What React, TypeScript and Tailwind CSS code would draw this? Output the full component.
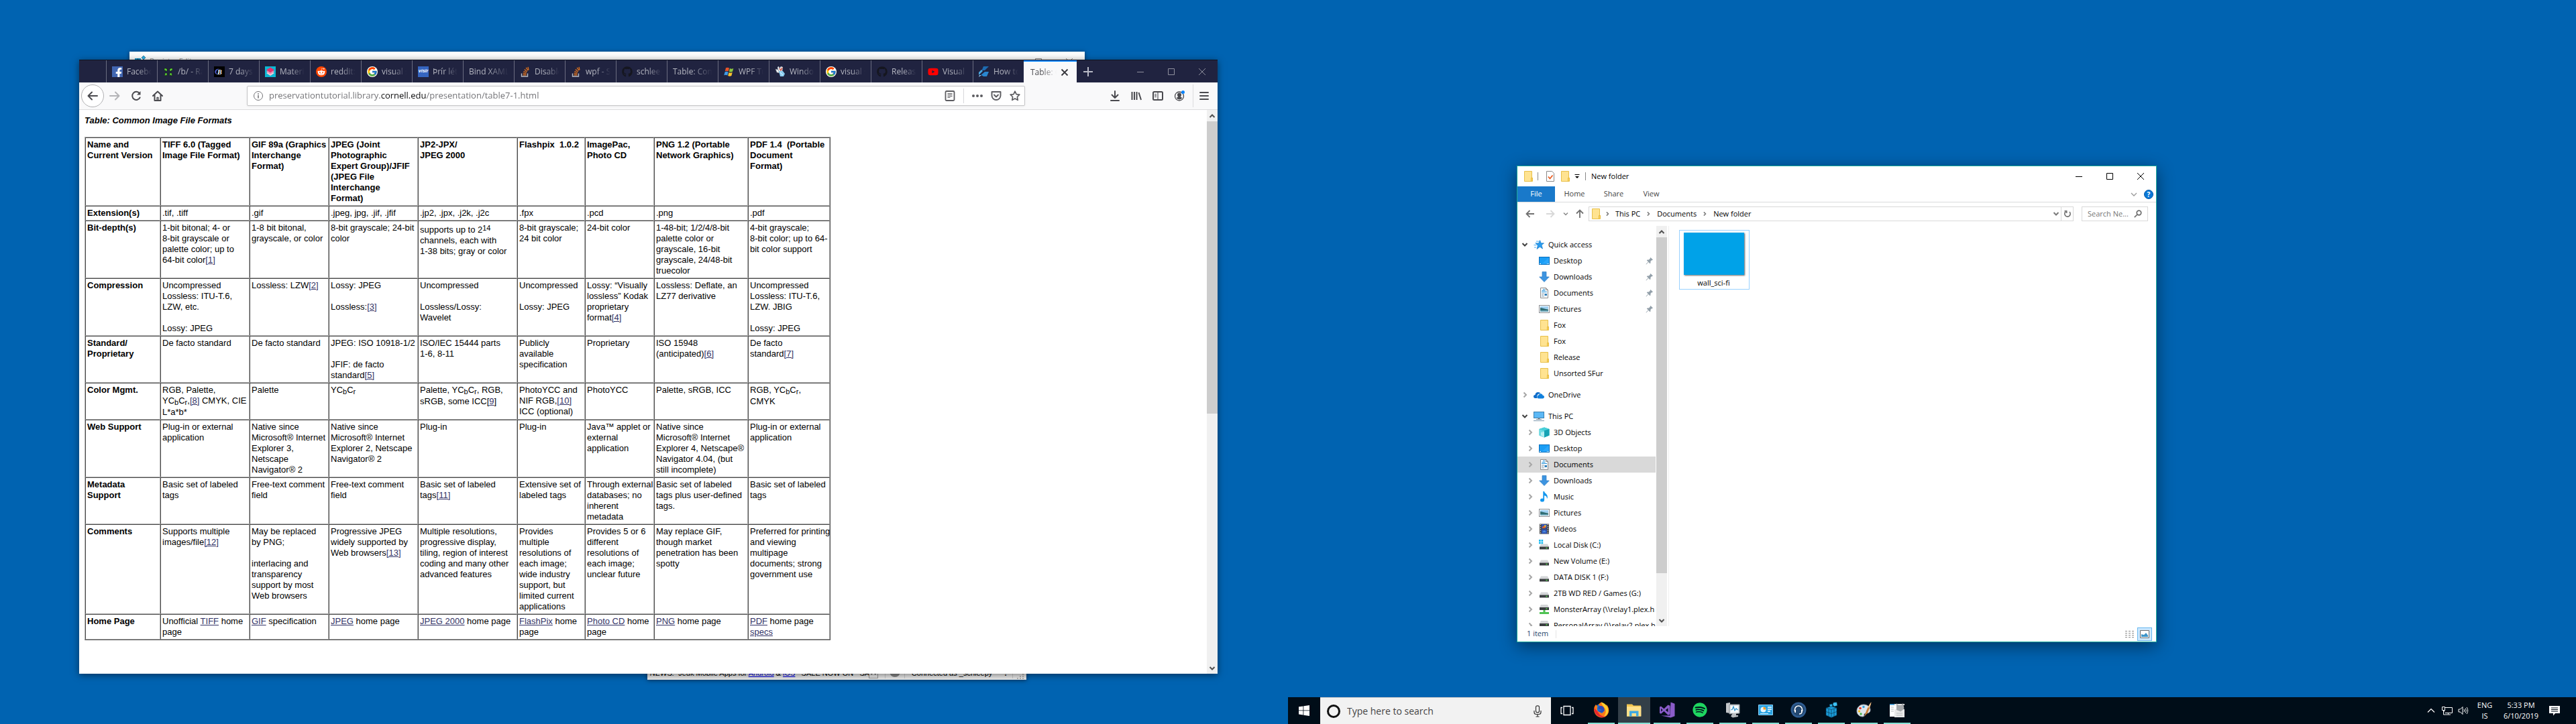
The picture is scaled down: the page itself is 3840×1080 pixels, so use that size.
import React from "react";
import { FaFacebookF, FaGithub, FaSpotify, FaRedditAlien, FaYoutube } from "react-icons/fa";
import { FcGoogle } from "react-icons/fc";

type Kids = { children?: React.ReactNode };

/* ---------- Browser tab favicons ---------- */

function Tile({ className, children }: Kids & { className: string }) {
  return <span className={"flex size-4 shrink-0 items-center justify-center overflow-hidden " + className}>{children}</span>;
}

const StackIcon = () => (
  <svg viewBox="0 0 16 16" className="size-4 shrink-0" fill="none" strokeWidth="1.4">
    <path d="M2.500 10.500v4.500h9v-4.500" stroke="#b9bcc4" />
    <path d="M4.500 12.800h5M4.600 10.300l5 .6M5.300 7.600l4.700 1.600M6.800 4.600l4 3.100M9.200 1.800l2.900 4.400M12 .8l1 4.500" stroke="#d9701e" />
  </svg>
);

const WinFlag = () => (
  <svg viewBox="0 0 16 16" className="size-4 shrink-0">
    <path d="M3 2.200c1.800-.9 3.500-.6 5 .3L6.800 7.400c-1.500-.9-3.200-1-5-.2z" fill="#e8542a" />
    <path d="M9 3c1.700.9 3.500.8 5.300-.1L13 7.800c-1.800.8-3.500.9-5.200 0z" fill="#8cc63f" />
    <path d="M1.500 8.400c1.800-.8 3.500-.7 5 .2L5.300 13.500c-1.500-.9-3.300-1-5-.2z" fill="#3f9be6" />
    <path d="M7.500 9.100c1.700.9 3.500.8 5.200 0l-1.300 4.900c-1.700.8-3.500.9-5.200 0z" fill="#fbc52d" />
  </svg>
);

const FourArrows = () => (
  <svg viewBox="0 0 16 16" className="size-4 shrink-0" fill="#5fd33a" stroke="#0c1c0a" strokeWidth=".5">
    <path d="M2 3h3v1l1-1v4H3l1-1H2zM14 3h-3v1l-1-1v4h3l-1-1h2zM2.500 14l.5-4h3v4H5v-1H4v1zM13.500 14l-.5-4h-3v4h1v-1h1v1z" />
  </svg>
);

const tabs: { label: string; icon?: React.ReactNode }[] = [
  { label: "Facebook", icon: <Tile className="bg-[#4267b2]"><FaFacebookF className="mt-1 ml-1 size-4 text-white" /></Tile> },
  { label: "/b/ - Random", icon: <FourArrows /> },
  {
    label: "7 days to",
    icon: (
      <Tile className="bg-black">
        <svg viewBox="0 0 16 16" className="size-4">
          <path d="M8 3.500C3 3 .5 6.500 1.500 9.500c.8 2.400 3.500 3 5 2.500C3.500 11.500 2.500 9 4 6.500 5 4.800 6.500 4 8 3.500z" fill="#4a58c8" />
          <text x="5" y="12" fontSize="10" fontWeight="700" fontStyle="italic" fontFamily="Liberation Serif, serif" fill="#fff">B</text>
        </svg>
      </Tile>
    ),
  },
  {
    label: "Material",
    icon: (
      <Tile className="bg-[#0bb8d4]">
        <svg viewBox="0 0 16 16" className="size-4">
          <path d="M2 10l6 4 6-4-2-1.200-4 2.600-4-2.600z" fill="#f7c9d8" />
          <path d="M2 7.500l6 4 6-4-2-1.200-4 2.700-4-2.700z" fill="#f48fb1" />
          <path d="M8 1.500l6 3.700-6 4-6-4z" fill="#e9316d" />
        </svg>
      </Tile>
    ),
  },
  { label: "reddit: the", icon: <Tile className="rounded-full bg-[#ff4500]"><FaRedditAlien className="size-3 text-white" /></Tile> },
  { label: "visual studio", icon: <Tile className="rounded-full bg-white"><FcGoogle className="size-4" /></Tile> },
  {
    label: "Þrír létust",
    icon: <Tile className="bg-[#3565c0] font-['Liberation_Sans',sans-serif] text-[7px] font-bold text-white italic">vísir</Tile>,
  },
  { label: "Bind XAML to" },
  { label: "Disable the", icon: <StackIcon /> },
  { label: "wpf - Style", icon: <StackIcon /> },
  { label: "schleepy", icon: <FaGithub className="size-4 shrink-0 text-[#15161f]" /> },
  { label: "Table: Common" },
  { label: "WPF Tutorial", icon: <WinFlag /> },
  {
    label: "Windows",
    icon: (
      <svg viewBox="0 0 16 16" className="size-4 shrink-0">
        <path d="M4 1l2-1 1 3 2-3 3 1-1 7H5z" fill="#dfe3e8" />
        <path d="M7 3l2 3 2-4" stroke="#d8432f" fill="none" strokeWidth="1.300" />
        <path d="M1 4l4 1 2 5-4-1z" fill="#f2f4f6" stroke="#6d7680" strokeWidth=".6" />
        <path d="M6 7l6 0 3 4-2 4H8z" fill="#8ccdf0" />
        <path d="M8 9l4 4" stroke="#e8f6ff" />
      </svg>
    ),
  },
  { label: "visual studio", icon: <Tile className="rounded-full bg-white"><FcGoogle className="size-4" /></Tile> },
  { label: "Releases", icon: <FaGithub className="size-4 shrink-0 text-[#15161f]" /> },
  { label: "Visual Studio", icon: <FaYoutube className="size-4 shrink-0 text-[#ff0000]" /> },
  {
    label: "How to use",
    icon: (
      <svg viewBox="0 0 16 16" className="size-4 shrink-0">
        <path d="M7 0h8L9 6H4.500z" fill="#1d6bb0" />
        <path d="M4 5L0 9v4l6-6z" fill="#4aa7e0" />
        <path d="M1 15L9 8h6l-3 7H7L4 13z" fill="#2a86cf" />
        <path d="M0 16l4-3H1z" fill="#8fc9f0" />
      </svg>
    ),
  },
];

/* ---------- Firefox chrome ---------- */

function TabStrip() {
  return (
    <div className="flex h-[34px] border-t border-[#10131f] bg-[#202340] text-[12px] text-[#b4b6c0]">
      <div className="w-10 shrink-0" />
      <div role="tablist" className="flex max-w-[1447px] min-w-0 flex-1">
        {tabs.map((t, i) => (
          <button key={i} role="tab" className="flex min-w-0 flex-1 basis-0 items-center gap-[6px] border-l border-[#6a6c80] px-2">
            {t.icon}
            <span className="min-w-0 flex-1 overflow-hidden text-left whitespace-nowrap [mask-image:linear-gradient(to_right,black_45%,transparent)]">
              {t.label}
            </span>
          </button>
        ))}
        <div role="tab" aria-selected="true" className="flex min-w-0 flex-1 basis-0 items-center gap-1 border-t-2 border-[#0a84ff] bg-[#f9f9fa] pr-[10px] pl-[10px] text-[#4c4c50]">
          <span className="min-w-0 flex-1 overflow-hidden whitespace-nowrap [mask-image:linear-gradient(to_right,black_45%,transparent)]">Table: Common</span>
          <button aria-label="Close tab">
            <svg viewBox="0 0 16 16" className="size-4" stroke="#38383d" strokeWidth="1.800"><path d="M3.500 3.500l9 9M12.500 3.500l-9 9" /></svg>
          </button>
        </div>
      </div>
      <button aria-label="New tab" className="flex w-[34px] shrink-0 items-center justify-center">
        <svg viewBox="0 0 16 16" className="size-4" stroke="#b9bac6" strokeWidth="2"><path d="M8 1v14M1 8h14" /></svg>
      </button>
      <div className="ml-auto flex">
        <button aria-label="Minimize" className="flex w-[46px] items-center justify-center">
          <svg viewBox="0 0 10 10" className="size-[10px]" stroke="#8f909e"><path d="M0 5.500h10" /></svg>
        </button>
        <button aria-label="Maximize" className="flex w-[46px] items-center justify-center">
          <svg viewBox="0 0 10 10" className="size-[10px]" fill="none" stroke="#8f909e"><path d="M.5.5h9v9h-9z" /></svg>
        </button>
        <button aria-label="Close" className="flex w-[46px] items-center justify-center">
          <svg viewBox="0 0 10 10" className="size-[10px]" stroke="#8f909e"><path d="M0 0l10 10M10 0L0 10" /></svg>
        </button>
      </div>
    </div>
  );
}

function ToolButton({ label, children }: Kids & { label: string }) {
  return (
    <button aria-label={label} className="flex w-8 shrink-0 items-center justify-center">
      <svg viewBox="0 0 16 16" className="size-4" fill="none" stroke="#4a4a4f" strokeWidth="2" strokeLinecap="round" strokeLinejoin="round">
        {children}
      </svg>
    </button>
  );
}

function UrlBar() {
  return (
    <div className="ml-[117px] flex h-[30px] max-w-[1160px] min-w-0 flex-1 items-center rounded-[2px] border border-[#c4c4c6] bg-white shadow-[0_1px_3px_rgba(0,0,0,0.06)]">
      <svg viewBox="0 0 16 16" className="mr-2 ml-2 size-4 shrink-0" fill="none" stroke="#737377">
        <circle cx="8" cy="8" r="6.500" />
        <path d="M8 7v4.500M8 4.300v1.600" strokeWidth="1.600" />
      </svg>
      <input
        aria-label="Address"
        readOnly
        value="preservationtutorial.library.cornell.edu/presentation/table7-1.html"
        className="min-w-0 flex-1 bg-[linear-gradient(to_right,#6f6f73_166px,#0c0c0d_166px,#0c0c0d_234px,#6f6f73_234px)] bg-clip-text text-[13px] text-transparent outline-none"
      />
      <button aria-label="Reader view" className="mr-[12px]">
        <svg viewBox="0 0 16 16" className="size-4" fill="none" stroke="#5c5c60">
          <rect x="1.500" y="1" width="13" height="14" rx="1.500" strokeWidth="1.800" />
          <path d="M4.500 4.500h7M4.500 6.500h7M4.500 8.500h7M4.500 10.500h4" />
        </svg>
      </button>
      <div className="h-[22px] w-px bg-[#d7d7db]" />
      <button aria-label="Page actions" className="ml-3">
        <svg viewBox="0 0 16 16" className="size-4" fill="#5c5c60"><circle cx="2" cy="8" r="2" /><circle cx="8" cy="8" r="2" /><circle cx="14" cy="8" r="2" /></svg>
      </button>
      <button aria-label="Save to Pocket" className="ml-3">
        <svg viewBox="0 0 16 16" className="size-4" fill="none" stroke="#5c5c60" strokeWidth="1.900" strokeLinecap="round" strokeLinejoin="round">
          <path d="M1.500 2h13v5.500a6.500 6.500 0 0 1-13 0z" /><path d="M5 6.500l3 3 3-3" />
        </svg>
      </button>
      <button aria-label="Bookmark" className="mr-[6px] ml-3">
        <svg viewBox="0 0 16 16" className="size-4" fill="none" stroke="#5c5c60" strokeWidth="1.700" strokeLinejoin="round">
          <path d="M8 1.200l2.100 4.400 4.700.6-3.400 3.300.8 4.800L8 12l-4.200 2.300.8-4.800L1.200 6.200l4.700-.6z" />
        </svg>
      </button>
    </div>
  );
}

function NavBar() {
  return (
    <div className="flex h-[41px] items-center border-b border-[#dcdcde] bg-[#f9f9fa] pl-[3px]">
      <button aria-label="Back" className="flex size-[34px] shrink-0 items-center justify-center rounded-full border border-[#b1b1b3] bg-white">
        <svg viewBox="0 0 16 16" className="size-4" fill="none" stroke="#4a4a4f" strokeWidth="2" strokeLinecap="round" strokeLinejoin="round"><path d="M15 8H1.500M7 2.500L1.500 8 7 13.500" /></svg>
      </button>
      <button aria-label="Forward" className="flex w-8 shrink-0 items-center justify-center">
        <svg viewBox="0 0 16 16" className="size-4" fill="none" stroke="#b4b4b7" strokeWidth="2" strokeLinecap="round" strokeLinejoin="round"><path d="M1 8h13.500M9 2.500L14.500 8 9 13.500" /></svg>
      </button>
      <ToolButton label="Reload"><path d="M13.600 10.500A6 6 0 1 1 12.800 4" /><path d="M14.500 1v5.500H9z" fill="#4a4a4f" stroke="none" /></ToolButton>
      <ToolButton label="Home"><path d="M1 8l7-6.500L15 8M3.500 7v8h9V7" /><path d="M7 15v-4.500h2V15" strokeWidth="1.300" /></ToolButton>
      <UrlBar />
      <div className="ml-auto flex h-full items-center pr-1">
        <ToolButton label="Downloads"><path d="M8 1v9.500M3.500 6.500L8 11l4.500-4.500M2 15h12" /></ToolButton>
        <ToolButton label="Library"><path d="M1.500 2v12M5 2v12M8.500 2v12M11.500 3l3.500 11" strokeLinecap="butt" /></ToolButton>
        <ToolButton label="Sidebars"><rect x="1" y="2" width="14" height="12" rx="1.500" /><path d="M8 2v12M3.500 5.500h2M3.500 7.500h2M3.500 9.500h2" strokeWidth="1.100" /></ToolButton>
        <ToolButton label="Account">
          <circle cx="8" cy="8.500" r="6.500" strokeWidth="1.300" />
          <path d="M8 3.500a3 3 0 0 1 3 3c0 1.600-.8 2.600-1.300 3l2.800 1.500A5.500 5.500 0 0 1 8 13.500 5.500 5.500 0 0 1 3.500 11l2.800-1.500C5.800 9.100 5 8.100 5 6.500a3 3 0 0 1 3-3z" fill="#4a4a4f" stroke="none" />
          <circle cx="13.500" cy="2.500" r="2.500" fill="#0a84ff" stroke="none" />
        </ToolButton>
        <div className="ml-1 h-[34px] w-px bg-[#dcdcde]" />
        <ToolButton label="Menu"><path d="M2 3h12M2 8h12M2 13h12" /></ToolButton>
      </div>
    </div>
  );
}

/* ---------- Web page ---------- */

/* {..} marks a link, ~..~ a subscript and ^..^ a superscript. */
function Rich({ text }: { text: string }) {
  return (
    <>
      {text.split(/(\{.*?\}|~.*?~|\^.*?\^)/).map((part, i) => {
        const inner = part.slice(1, -1);
        if (part.startsWith("{")) return <a key={i} href="#" className="text-[#333366] underline">{inner}</a>;
        if (part.startsWith("~")) return <sub key={i} className="static align-[-2px] text-[11px] leading-[13px]">{inner}</sub>;
        if (part.startsWith("^")) return <sup key={i} className="static align-[3px] text-[11px] leading-4">{inner}</sup>;
        return <React.Fragment key={i}>{part}</React.Fragment>;
      })}
    </>
  );
}

const columns = ["w-[112px]", "w-[133px]", "w-[118px]", "w-[133px]", "w-[148px]", "w-[101px]", "w-[103px]", "w-[140px]", "w-[122px]"];

const headings = [
  "Name and\nCurrent Version",
  "TIFF 6.0 (Tagged\nImage File Format)",
  "GIF 89a (Graphics\nInterchange\nFormat)",
  "JPEG (Joint\nPhotographic\nExpert Group)/JFIF\n(JPEG File\nInterchange\nFormat)",
  "JP2-JPX/\nJPEG 2000",
  "Flashpix  1.0.2",
  "ImagePac,\nPhoto CD",
  "PNG 1.2 (Portable\nNetwork Graphics)",
  "PDF 1.4  (Portable\nDocument\nFormat)",
];

const rows = [
  ["Extension(s)", ".tif, .tiff", ".gif", ".jpeg, jpg, .jif, .jfif", ".jp2, .jpx, .j2k, .j2c", ".fpx", ".pcd", ".png", ".pdf"],
  [
    "Bit-depth(s)",
    "1-bit bitonal; 4- or\n8-bit grayscale or\npalette color; up to\n64-bit color{[1]}",
    "1-8 bit bitonal,\ngrayscale, or color",
    "8-bit grayscale; 24-bit\ncolor",
    "supports up to 2^14^\nchannels, each with\n1-38 bits; gray or color",
    "8-bit grayscale;\n24 bit color",
    "24-bit color",
    "1-48-bit; 1/2/4/8-bit\npalette color or\ngrayscale, 16-bit\ngrayscale, 24/48-bit\ntruecolor",
    "4-bit grayscale;\n8-bit color; up to 64-\nbit color support",
  ],
  [
    "Compression",
    "Uncompressed\nLossless: ITU-T.6,\nLZW, etc.\n\nLossy: JPEG",
    "Lossless: LZW{[2]}",
    "Lossy: JPEG\n\nLossless:{[3]}",
    "Uncompressed\n\nLossless/Lossy:\nWavelet",
    "Uncompressed\n\nLossy: JPEG",
    "Lossy: “Visually\nlossless” Kodak\nproprietary\nformat{[4]}",
    "Lossless: Deflate, an\nLZ77 derivative",
    "Uncompressed\nLossless: ITU-T.6,\nLZW. JBIG\n\nLossy: JPEG",
  ],
  [
    "Standard/\nProprietary",
    "De facto standard",
    "De facto standard",
    "JPEG: ISO 10918-1/2\n\nJFIF: de facto\nstandard{[5]}",
    "ISO/IEC 15444 parts\n1-6, 8-11",
    "Publicly\navailable\nspecification",
    "Proprietary",
    "ISO 15948\n(anticipated){[6]}",
    "De facto\nstandard{[7]}",
  ],
  [
    "Color Mgmt.",
    "RGB, Palette,\nYC~b~C~r~,{[8]} CMYK, CIE\nL*a*b*",
    "Palette",
    "YC~b~C~r~",
    "Palette, YC~b~C~r~, RGB,\nsRGB, some ICC[{9}]",
    "PhotoYCC and\nNIF RGB,{[10]}\nICC (optional)",
    "PhotoYCC",
    "Palette, sRGB, ICC",
    "RGB, YC~b~C~r~,\nCMYK",
  ],
  [
    "Web Support",
    "Plug-in or external\napplication",
    "Native since\nMicrosoft® Internet\nExplorer 3,\nNetscape\nNavigator® 2",
    "Native since\nMicrosoft® Internet\nExplorer 2, Netscape\nNavigator® 2",
    "Plug-in",
    "Plug-in",
    "Java™ applet or\nexternal\napplication",
    "Native since\nMicrosoft® Internet\nExplorer 4, Netscape®\nNavigator 4.04, (but\nstill incomplete)",
    "Plug-in or external\napplication",
  ],
  [
    "Metadata\nSupport",
    "Basic set of labeled\ntags",
    "Free-text comment\nfield",
    "Free-text comment\nfield",
    "Basic set of labeled\ntags{[11]}",
    "Extensive set of\nlabeled tags",
    "Through external\ndatabases; no\ninherent\nmetadata",
    "Basic set of labeled\ntags plus user-defined\ntags.",
    "Basic set of labeled\ntags",
  ],
  [
    "Comments",
    "Supports multiple\nimages/file{[12]}",
    "May be replaced\nby PNG;\n\ninterlacing and\ntransparency\nsupport by most\nWeb browsers",
    "Progressive JPEG\nwidely supported by\nWeb browsers{[13]}",
    "Multiple resolutions,\nprogressive display,\ntiling, region of interest\ncoding and many other\nadvanced features",
    "Provides\nmultiple\nresolutions of\neach image;\nwide industry\nsupport, but\nlimited current\napplications",
    "Provides 5 or 6\ndifferent\nresolutions of\neach image;\nunclear future",
    "May replace GIF,\nthough market\npenetration has been\nspotty",
    "Preferred for printing\nand viewing\nmultipage\ndocuments; strong\ngovernment use",
  ],
  [
    "Home Page",
    "Unofficial {TIFF} home\npage",
    "{GIF} specification",
    "{JPEG} home page",
    "{JPEG 2000} home page",
    "{FlashPix} home\npage",
    "{Photo CD} home\npage",
    "{PNG} home page",
    "{PDF} home page\n{specs}",
  ],
];

const cell = "border border-t-[#4a4a4a] border-r-[#b0b0b0] border-b-[#b0b0b0] border-l-[#4a4a4a] p-[2px] text-left align-top whitespace-pre";

function FormatsPage() {
  return (
    <article className="min-w-0 flex-1 overflow-hidden bg-white p-2 font-['Liberation_Sans',Arial,sans-serif] text-[13px] leading-4 text-black">
      <h1 className="mb-4 font-bold italic">Table: Common Image File Formats</h1>
      <table className="w-[1112px] table-fixed border-separate border-spacing-0 border border-t-[#b0b0b0] border-r-[#4a4a4a] border-b-[#4a4a4a] border-l-[#b0b0b0]">
        <colgroup>{columns.map((w, i) => <col key={i} className={w} />)}</colgroup>
        <thead>
          <tr>{headings.map((h) => <th key={h} scope="col" className={cell + " font-bold"}>{h}</th>)}</tr>
        </thead>
        <tbody>
          {rows.map((r) => (
            <tr key={r[0]}>
              <th scope="row" className={cell + " font-bold"}>{r[0]}</th>
              {r.slice(1).map((c, i) => <td key={i} className={cell}><Rich text={c} /></td>)}
            </tr>
          ))}
        </tbody>
      </table>
    </article>
  );
}

function Arrow({ d, className = "" }: { d: string; className?: string }) {
  return (
    <svg viewBox="0 0 10 10" className={"size-[10px] shrink-0 " + className} fill="none" stroke="currentColor" strokeWidth="2"><path d={d} /></svg>
  );
}
const UP = "M1.500 7L5 3.500 8.500 7";
const DOWN = "M1.500 3L5 6.500 8.500 3";
const RIGHT = "M3.500 1.500L7 5 3.500 8.500";

function ScrollBar({ thumb }: { thumb: string }) {
  return (
    <div className="flex w-4 shrink-0 flex-col items-center bg-[#f0f0f0] text-[#505050]">
      <div className="flex h-[17px] items-center"><Arrow d={UP} /></div>
      <div className="flex w-full flex-1 flex-col"><div className={"w-full bg-[#cdcdcd] " + thumb} /></div>
      <div className="flex h-[17px] items-center"><Arrow d={DOWN} /></div>
    </div>
  );
}

function FirefoxWindow() {
  return (
    <section aria-label="Firefox" className="absolute top-[89px] right-[105px] bottom-[75px] left-[118px] flex flex-col bg-white shadow-[0_2px_10px_rgba(0,0,0,0.5)]">
      <TabStrip />
      <NavBar />
      <div className="flex min-h-0 flex-1">
        <FormatsPage />
        <ScrollBar thumb="h-[54%]" />
      </div>
    </section>
  );
}

/* ---------- Windows behind the browser ---------- */

function RegistryWindow() {
  return (
    <section aria-label="Registry Editor" className="absolute top-[77px] right-[303px] left-[193px] flex h-[200px] items-start bg-[#fdfdfd] pt-[6px] pl-2 shadow-[0_1px_6px_rgba(0,0,0,0.5)]">
      <svg viewBox="0 0 16 16" className="size-4">
        <path d="M0 4h9v12H0z" fill="#1593c9" /><path d="M4.500 4v12M0 8h9" stroke="#0b4f75" /><path d="M13 0l3 3-3 3-3-3z" fill="#2db3e8" stroke="#0b4f75" strokeWidth=".6" />
      </svg>
      <span className="ml-[6px] text-[11px] text-[#999]">Registry Editor</span>
      <div className="mr-[18px] ml-auto flex gap-[36px] pt-1 text-[#888]">
        <svg viewBox="0 0 10 10" className="size-[10px]" fill="none" stroke="currentColor"><path d="M.5.5h9v9h-9z" /></svg>
        <svg viewBox="0 0 10 10" className="size-[10px]" stroke="currentColor"><path d="M0 0l10 10M10 0L0 10" /></svg>
      </div>
    </section>
  );
}

function StatusWindow() {
  return (
    <section aria-label="Messenger status" className="absolute right-[390px] bottom-[66px] left-[965px] flex h-6 items-center bg-[#ececec] px-1 font-['Liberation_Sans',Arial,sans-serif] text-[11px] whitespace-pre text-black shadow-[0_1px_6px_rgba(0,0,0,0.5)]">
      <p className="min-w-0 flex-1 overflow-hidden pt-1">
        <i>NEWS:</i>{"  Jeuk Mobile Apps for "}<a href="#" className="text-[#0000ee] underline">Android</a>{" & "}<a href="#" className="text-[#0000ee] underline">iOS</a>{"   SALE NOW ON   SAVE !"}
      </p>
      <button aria-label="Scroll news" className="mt-1 flex h-4 w-[14px] shrink-0 items-center justify-center border border-[#999] text-[#555]"><Arrow d={UP} /></button>
      <div className="ml-[10px] h-5 w-px bg-[#ccc]" />
      <div className="mx-[6px] h-4 w-4 shrink-0 rounded-full bg-[#888]" />
      <div className="mr-[10px] h-5 w-px bg-[#ccc]" />
      <span className="pt-1 pr-[18px]">Connected as _schleepy</span>
      <span className="pt-1 pr-2 font-bold">!</span>
      <div className="h-5 w-px bg-[#ccc]" />
      <svg viewBox="0 0 10 10" className="ml-[6px] size-[10px] shrink-0 self-end" fill="#b5b5b5"><path d="M8 1h2v2H8zM4 4h2v2H4zM8 4h2v2H8zM0 7h2v2H0zM4 7h2v2H4zM8 7h2v2H8z" /></svg>
    </section>
  );
}

/* ---------- File Explorer ---------- */

const Folder = () => (
  <svg viewBox="0 0 16 16" className="size-4 shrink-0">
    <path d="M2.500.5h11v10h1v5h-12z" fill="#ffe391" stroke="#e8c04a" />
    <path d="M12.500 15v-4.500h2V15" fill="#fbd86b" stroke="#e8b93a" />
  </svg>
);
const DesktopIcon = () => (
  <svg viewBox="0 0 16 16" className="size-4 shrink-0">
    <rect x=".5" y="2.500" width="15" height="11" fill="#1a9df4" stroke="#0a6fbc" /><path d="M15 3v9L4 13z" fill="#35adff" opacity=".6" /><path d="M1 12.500h2M12 12.500h1M14 12.500h1" stroke="#fff" />
  </svg>
);
const DownloadIcon = () => (
  <svg viewBox="0 0 16 16" className="size-4 shrink-0"><path d="M5 .5h6V8h4.300L8 15.500.7 8H5z" fill="#3d94e0" stroke="#2a7bc4" strokeWidth=".7" /></svg>
);
const DocIcon = () => (
  <svg viewBox="0 0 16 16" className="size-4 shrink-0">
    <path d="M2.500.5h8l3 3v12h-11z" fill="#fff" stroke="#8a8a8a" /><path d="M10.500.5v3h3" fill="none" stroke="#8a8a8a" />
    <path d="M6 2.500h3M4.500 4.500h5M4 6.500h8" stroke="#1e8fd8" /><path d="M4 9h4M4 11h3M4 13h4" stroke="#8aa3b5" /><path d="M8.500 9h3.500v3H8.500z" fill="#2f7fb8" />
  </svg>
);
const PicturesIcon = () => (
  <svg viewBox="0 0 16 16" className="size-4 shrink-0">
    <rect x=".5" y="2.500" width="15" height="11" fill="#fff" stroke="#8a8f94" /><path d="M2 4h12v4H2z" fill="#9fd0f2" /><path d="M2 6c4 0 7 2.500 12 2.500V12H2z" fill="#2f6d73" /><path d="M2 10h12v2H2z" fill="#6ca5b8" />
  </svg>
);
const StarIcon = () => (
  <svg viewBox="0 0 16 16" className="size-4 shrink-0">
    <path d="M9.500 1.500l1.700 4.300h4.300L12 8.600l1.500 5.400-4-2.800L5 14.500l1.400-5.300L3.500 6l4.300-.2z" fill="#2a9df0" stroke="#1577c4" strokeWidth=".7" />
    <path d="M4 3h4M2.500 5.500H5M.5 8.500h4M1 12h3" stroke="#49aef5" />
  </svg>
);
const CloudIcon = () => (
  <svg viewBox="0 0 16 16" className="size-4 shrink-0">
    <path d="M2.500 13C.8 13 0 11.800 0 10.500 0 9 1.200 8 2.500 8c.2-2.400 2-4 4.300-4 1.800 0 3 .9 3.700 2.200C7.500 5.800 5 8 5 10.500c0 1 .2 1.800.7 2.500z" fill="#0f6cc9" />
    <path d="M8 13.500a2.500 2.500 0 0 1-.3-5c.5-1.500 1.700-2.200 3-2.200 1.500 0 2.600 1 3 2.400 1.500.2 2.300 1.200 2.300 2.400s-1 2.400-2.400 2.400z" fill="#1180dd" />
  </svg>
);
const PcIcon = () => (
  <svg viewBox="0 0 16 16" className="size-4 shrink-0">
    <rect x=".5" y="1.500" width="15" height="9" fill="#5cb8f5" stroke="#3a7fb0" /><path d="M7 11h2v1.500H7zM4 12.500h8" stroke="#8a9aa5" /><path d="M0 14.500h16" stroke="#9fb3c2" strokeWidth="1.500" />
  </svg>
);
const CubeIcon = () => (
  <svg viewBox="0 0 16 16" className="size-4 shrink-0">
    <path d="M8 .5l7.500 2.500v9.500L8 15.500.5 12.500V3z" fill="#2bbdcb" /><path d="M.5 3L8 5.500v10L.5 12.500z" fill="#6fdbe3" /><path d="M3 8l5-1v8.500l-5-3z" fill="#b5eff2" /><path d="M8 .5l7.500 2.500L8 5.500.5 3z" fill="#49cfd9" /><path d="M8 5.500L15.500 3v9.500L8 15.500z" fill="#17a3b4" />
  </svg>
);
const MusicIcon = () => (
  <svg viewBox="0 0 16 16" className="size-4 shrink-0" fill="#1296ee">
    <ellipse cx="5" cy="13" rx="3" ry="2.600" /><path d="M6.300 13V0h1.800c.3 3 4.800 3.500 4.800 8.500 0 1-.4 2-1 2.500.4-3-1.500-4.500-3.800-4.800V13z" />
  </svg>
);
const VideoIcon = () => (
  <svg viewBox="0 0 16 16" className="size-4 shrink-0">
    <path d="M1 .5h14v15H1z" fill="#3a3a3a" /><path d="M2.500 1v14M13.500 1v14" stroke="#e8e8e8" strokeDasharray="1.500 1.500" strokeWidth="1.200" />
    <path d="M4 1h8v6.500H4zM4 8.500h8V15H4z" fill="#3156b8" /><path d="M5 5l3-2 3 2-2 2H5z" fill="#d8622c" /><path d="M8 2.500h3v2H8z" fill="#e6c52f" /><path d="M5 13l3-3 3 3z" fill="#4d8fdd" />
  </svg>
);
const DriveIcon = ({ kind }: { kind?: "windows" | "network" }) => (
  <svg viewBox="0 0 16 16" className="size-4 shrink-0">
    {kind === "network" ? (
      <>
        <path d="M3 1h10l2 4H1z" fill="#d4d6d8" /><path d="M1 5h14v4H1z" fill="#3a3d40" /><path d="M10.500 7h2" stroke="#57e04a" strokeWidth="1.500" />
        <path d="M6.500 9h3v3H15v3H1v-3h5.500z" fill="#4fc253" />
      </>
    ) : (
      <>
        <path d="M3 6.500h10l2 4H1z" fill="#d4d6d8" /><path d="M1 10.500h14v4H1z" fill="#3a3d40" /><path d="M10.500 12.500h2" stroke="#57e04a" strokeWidth="1.500" />
        {kind === "windows" && <path d="M0 0h2.700v2.700H0zM3.500 0h2.700v2.700H3.500zM0 3.500h2.700v2.700H0zM3.500 3.500h2.700v2.700H3.500z" fill="#16b9f0" />}
      </>
    )}
  </svg>
);
const PinIcon = () => (
  <svg viewBox="0 0 12 12" className="mr-[3px] size-3 shrink-0" fill="#93a0aa"><path d="M7.500 1L11 4.500l-1 .8-.6-.2-2 2 .1 2.200-.9.900-2.200-2.200L1 11.500l-.5-.5L4 7.600 1.800 5.400l.9-.9 2.200.1 2-2-.2-.6z" /></svg>
);

type Item = { label: string; icon: React.ReactNode; pin?: boolean; arrow?: boolean; selected?: boolean };
type Group = Item & { open: boolean; items: Item[] };

const tree: Group[] = [
  {
    label: "Quick access", icon: <StarIcon />, open: true,
    items: [
      { label: "Desktop", icon: <DesktopIcon />, pin: true },
      { label: "Downloads", icon: <DownloadIcon />, pin: true },
      { label: "Documents", icon: <DocIcon />, pin: true },
      { label: "Pictures", icon: <PicturesIcon />, pin: true },
      { label: "Fox", icon: <Folder /> },
      { label: "Fox", icon: <Folder /> },
      { label: "Release", icon: <Folder /> },
      { label: "Unsorted SFur", icon: <Folder /> },
    ],
  },
  { label: "OneDrive", icon: <CloudIcon />, open: false, items: [] },
  {
    label: "This PC", icon: <PcIcon />, open: true,
    items: [
      { label: "3D Objects", icon: <CubeIcon />, arrow: true },
      { label: "Desktop", icon: <DesktopIcon />, arrow: true },
      { label: "Documents", icon: <DocIcon />, arrow: true, selected: true },
      { label: "Downloads", icon: <DownloadIcon />, arrow: true },
      { label: "Music", icon: <MusicIcon />, arrow: true },
      { label: "Pictures", icon: <PicturesIcon />, arrow: true },
      { label: "Videos", icon: <VideoIcon />, arrow: true },
      { label: "Local Disk (C:)", icon: <DriveIcon kind="windows" />, arrow: true },
      { label: "New Volume (E:)", icon: <DriveIcon />, arrow: true },
      { label: "DATA DISK 1 (F:)", icon: <DriveIcon />, arrow: true },
      { label: "2TB WD RED / Games (G:)", icon: <DriveIcon />, arrow: true },
      { label: "MonsterArray (\\\\relay1.plex.h", icon: <DriveIcon kind="network" />, arrow: true },
      { label: "PersonalArray (\\\\relay2.plex.h", icon: <DriveIcon kind="network" />, arrow: true },
    ],
  },
];

function NavTree() {
  return (
    <nav className="flex w-[206px] shrink-0 flex-col gap-2 overflow-hidden pt-4">
      {tree.map((g) => (
        <div key={g.label} className="shrink-0">
          <button className="flex h-6 w-full items-center pl-[6px]">
            <Arrow d={g.open ? DOWN : RIGHT} className={g.open ? "text-[#404040]" : "text-[#a6a6a6]"} />
            <span className="mr-[6px] ml-2">{g.icon}</span>
            {g.label}
          </button>
          {g.items.map((it, i) => (
            <button key={i} className={"flex h-6 w-full items-center pl-[14px] whitespace-nowrap " + (it.selected ? "bg-[#d9d9d9]" : "")}>
              <Arrow d={RIGHT} className={it.arrow ? "text-[#a6a6a6]" : "invisible"} />
              <span className="mr-[6px] ml-2">{it.icon}</span>
              <span className="flex-1 text-left">{it.label}</span>
              {it.pin && <PinIcon />}
            </button>
          ))}
        </div>
      ))}
    </nav>
  );
}

function ExplorerWindow() {
  return (
    <section aria-label="File Explorer" className="absolute top-[247px] right-[625px] bottom-[122px] left-[341px] flex flex-col border border-[#18a999] bg-white text-[11px] text-black shadow-[0_6px_24px_rgba(0,0,0,0.45)]">
      <header className="flex h-[30px] items-center">
        <div className="flex flex-1 items-center pl-2">
          <Folder />
          <div className="mr-2 ml-[6px] h-3 w-px bg-[#888]" />
          <svg viewBox="0 0 16 16" className="ml-[2px] size-4"><path d="M2.500.5h8l3 3v12h-11z" fill="#fff" stroke="#8a8a8a" /><path d="M5 8.500l2.500 3 4-5" fill="none" stroke="#e8581c" strokeWidth="1.700" /></svg>
          <span className="mx-[6px]"><Folder /></span>
          <svg viewBox="0 0 8 8" className="size-2"><path d="M.5 1.500h7" stroke="#000" /><path d="M1 4h6L4 7z" /></svg>
          <div className="mx-2 h-3 w-px bg-[#888]" />
          <h2>New folder</h2>
        </div>
        <button aria-label="Minimize" className="flex w-[46px] justify-center"><svg viewBox="0 0 10 10" className="size-[10px]" stroke="#000"><path d="M0 5.500h10" /></svg></button>
        <button aria-label="Maximize" className="flex w-[46px] justify-center"><svg viewBox="0 0 10 10" className="size-[10px]" fill="none" stroke="#000"><path d="M.5.5h9v9h-9z" /></svg></button>
        <button aria-label="Close" className="flex w-[46px] justify-center"><svg viewBox="0 0 10 10" className="size-[10px]" stroke="#000"><path d="M0 0l10 10M10 0L0 10" /></svg></button>
      </header>
      <div className="flex h-6 items-stretch border-b border-[#dadbdc] text-[#444]">
        <button className="w-14 bg-[#1979ca] text-white">File</button>
        <button className="w-[58px]">Home</button>
        <button className="w-[59px]">Share</button>
        <button className="w-[53px]">View</button>
        <div className="ml-auto flex items-center gap-[10px] pr-1">
          <button aria-label="Expand ribbon"><svg viewBox="0 0 10 10" className="size-[10px]" fill="none" stroke="#999" strokeWidth="1.300"><path d="M1 3l4 4 4-4" /></svg></button>
          <button aria-label="Help" className="size-[14px] rounded-full border border-[#0a5aa5] bg-[#0a78d8] text-[10px] leading-3 font-bold text-white">?</button>
        </div>
      </div>
      <div className="mb-px flex h-[34px] items-center pr-3 text-[#7a7a7a]">
        <div className="flex w-[106px] shrink-0 items-center pl-3">
          <button aria-label="Back"><svg viewBox="0 0 14 14" className="size-[14px]" fill="none" stroke="#707070" strokeWidth="1.800"><path d="M13 7H2M6.500 2L1.500 7l5 5" /></svg></button>
          <button aria-label="Forward" className="ml-4"><svg viewBox="0 0 14 14" className="size-[14px]" fill="none" stroke="#d8d8d8" strokeWidth="1.800"><path d="M1 7h11M7.500 2l5 5-5 5" /></svg></button>
          <button aria-label="Recent locations" className="ml-3"><svg viewBox="0 0 8 8" className="size-2" fill="none" stroke="#888" strokeWidth="1.500"><path d="M1 2.500l3 3 3-3" /></svg></button>
          <button aria-label="Up" className="ml-[10px]"><svg viewBox="0 0 14 14" className="size-[14px]" fill="none" stroke="#707070" strokeWidth="1.800"><path d="M7 13V2M2 6.500l5-5 5 5" /></svg></button>
        </div>
        <div className="flex h-[22px] min-w-0 flex-1 items-center border border-[#d9d9d9]">
          <span className="ml-[2px]"><Folder /></span>
          <Arrow d={RIGHT} className="ml-1 scale-75" />
          <button className="ml-[7px] text-black">This PC</button>
          <Arrow d={RIGHT} className="ml-[7px] scale-75" />
          <button className="ml-2 text-black">Documents</button>
          <Arrow d={RIGHT} className="ml-[7px] scale-75" />
          <button className="ml-2 text-black">New folder</button>
          <button aria-label="Previous locations" className="mr-[2px] ml-auto"><Arrow d={DOWN} /></button>
          <button aria-label="Refresh" className="flex h-full w-[18px] items-center justify-center border-l border-[#d9d9d9]">
            <svg viewBox="0 0 12 12" className="size-3" fill="none" stroke="#707070" strokeWidth="1.600"><path d="M3.500 2.500A4.200 4.200 0 1 0 9 3" /><path d="M1.500 1.800h3.200V5" /></svg>
          </button>
        </div>
        <label className="ml-3 flex h-[22px] w-[99px] items-center border border-[#d9d9d9] pr-2 pl-2">
          <input aria-label="Search New folder" placeholder="Search Ne..." className="w-0 min-w-0 flex-1 outline-none placeholder:text-[#757575]" />
          <svg viewBox="0 0 12 12" className="size-3 shrink-0" fill="none" stroke="#707070" strokeWidth="1.700"><circle cx="7.500" cy="4.500" r="3.300" /><path d="M5 7L.8 11.200" /></svg>
        </label>
      </div>
      <div className="flex min-h-0 flex-1">
        <NavTree />
        <div className="ml-px flex"><ScrollBar thumb="h-[89%]" /></div>
        <div className="ml-[2px] w-px bg-[#f0f0f0]" />
        <div className="flex-1 pt-[6px] pl-[15px]">
          <button className="flex h-[89px] w-[105px] flex-col items-center gap-1 border border-[#99d1ff] pt-[3px] pr-[2px]">
            <span className="h-[63px] w-[90px] bg-[#00a2e8] shadow-[1px_1px_2px_rgba(0,0,0,0.6)]" />
            <span>wall_sci-fi</span>
          </button>
        </div>
      </div>
      <footer className="flex h-[23px] shrink-0 items-center pr-[6px] pl-[14px] text-[#26446b]">
        1 item
        <div className="ml-[11px] h-3 w-px bg-[#e5e5e5]" />
        <div className="ml-auto flex items-center">
          <button aria-label="Details view" className="flex h-5 w-[22px] items-center justify-center">
            <svg viewBox="0 0 14 12" className="h-3 w-[14px]" fill="none" stroke="#8a8a8a"><path d="M0 1.500h3M0 4.500h3M0 7.500h3M0 10.500h3M5 1.500h3M5 4.500h3M5 7.500h3M5 10.500h3M10 1.500h3M10 4.500h3M10 7.500h3M10 10.500h3" /></svg>
          </button>
          <button aria-label="Large icons view" className="flex h-5 w-[22px] items-center justify-center border border-[#66b7ee] bg-[#cce8ff]">
            <svg viewBox="0 0 14 12" className="h-3 w-[14px]"><path d="M.5.5h13v11H.5z" fill="#fff" stroke="#6b6b6b" /><path d="M2 10V6l4 1 3-3 3 4v2z" fill="#3d94c8" /></svg>
          </button>
        </div>
      </footer>
    </section>
  );
}

/* ---------- Taskbar ---------- */

const apps: { label: string; active?: boolean; icon: React.ReactNode }[] = [
  {
    label: "Firefox",
    icon: (
      <svg viewBox="0 0 24 24" className="size-6">
        <circle cx="12" cy="12.500" r="10" fill="#1a6fd0" />
        <path d="M12 .5c-3 1.500-4 3-4 4.500l6 2 3 6-4 4-6-3C5 11 6 8 6.500 7L4 4C1 7 .8 11 1.500 14.500 3 20 7.500 23.500 12.500 23.500c6 0 10.800-4.500 10.800-11C23.300 8 21 5 19 3.500c.8 1.500 1 2.500 1 3.500-2-4-5.500-3.500-8-6.500z" fill="#ff7a18" />
        <path d="M12 .5c4 1 10 5 10.500 11.500.3 5-3 9-7 10 3-3 4-7 2.500-11C17 8 12.500 5 12 .5z" fill="#ffce2e" />
        <path d="M1.500 9c-.5 4 1 9 5.500 12s10 2 12 .5c-4 1-9-1-11-5C6 13 4 12 1.500 9z" fill="#e8262f" />
        <path d="M9 6.500c3-1.500 7 0 7.500 4 .3 3-2 5-4.500 5-2 0-3.500-1-4-2 2.500.8 4-.5 5-1.500-1 0-2-1.500-4-1.500-1 0-1.500-.5-1.500-1.200C7.500 8.500 8.500 7.500 9 6.500z" fill="#2b49b8" />
      </svg>
    ),
  },
  {
    label: "File Explorer", active: true,
    icon: (
      <svg viewBox="0 0 24 24" className="size-6">
        <path d="M1 3.500h8l2 2h11v16H1z" fill="#f3c64f" /><path d="M1 7h21.500v14.500H1z" fill="#ffe08a" /><path d="M5 13.500h13.500v8H15v-4.500H8.500v4.500H5z" fill="#3fa9e0" />
      </svg>
    ),
  },
  {
    label: "Visual Studio",
    icon: (
      <svg viewBox="0 0 24 24" className="size-6">
        <path d="M17.500.5l6 2.300v18.400l-6 2.300L3 20.500l13.500 0z" fill="#8a5cc9" /><path d="M1 7.500l2-1 4.500 3.800L13.500 4.500l3 1.200v13l-3 1.100-6-5.800L3 17.800l-2-1zM3.200 9.800v4.800L5.500 12.200zM9.800 12.200l3.700 3V9.200z" fill="#8a5cc9" fillRule="evenodd" />
      </svg>
    ),
  },
  { label: "Spotify", icon: <FaSpotify className="size-[22px] rounded-full bg-[#00101c] text-[#1ed760]" /> },
  {
    label: "System monitor",
    icon: (
      <svg viewBox="0 0 24 24" className="size-6">
        <path d="M2 2l6-1v16l-6-1z" fill="#c4c7ca" /><path d="M7 4l15 0v13l-15 1z" fill="#dfe3e6" stroke="#8d9398" /><path d="M9 6h11v9.500L9 16z" fill="#f4fbff" /><path d="M9.500 12l2-1 1.500-4 2 6 2-3 2.500 2" fill="none" stroke="#2a8fc9" strokeWidth="1.200" /><path d="M12 17h5v3h3v2l-8 1.500-3-2z" fill="#b8bcc0" />
      </svg>
    ),
  },
  {
    label: "Control Panel",
    icon: (
      <svg viewBox="0 0 24 24" className="size-6">
        <path d="M1.500 4.500h21v15h-21z" fill="#29a3e3" stroke="#8fd3f7" /><circle cx="8.500" cy="11.500" r="4" fill="#e6f6ff" /><path d="M8.500 11.500v-4a4 4 0 0 1 4 4z" fill="#f59b23" /><path d="M15 8h6M15 11h6M15 14h4" stroke="#fff" strokeWidth="1.300" /><path d="M4 17.500h12" stroke="#d5f0ff" />
      </svg>
    ),
  },
  {
    label: "TeamSpeak",
    icon: (
      <svg viewBox="0 0 24 24" className="size-6">
        <circle cx="12" cy="12" r="11.500" fill="#2f5d92" /><circle cx="12" cy="12" r="9" fill="#23476f" /><path d="M6.500 13v-1.500a5.500 5.500 0 0 1 11 0V13" fill="none" stroke="#fff" strokeWidth="1.500" /><path d="M5.500 12h2.500v4H6.500zM16 12h2.500l-1 4H16z" fill="#fff" /><path d="M17 15.500c-.5 2-2 2.500-4 2.500" fill="none" stroke="#fff" strokeWidth="1.300" />
      </svg>
    ),
  },
  {
    label: "Registry Editor",
    icon: (
      <svg viewBox="0 0 24 24" className="size-6" stroke="#06314a" strokeWidth=".6">
        <path d="M4 9l8-2.500 8 2.500v11l-8 3.500L4 20z" fill="#1a9ad6" /><path d="M12 11.500v12M4 9l8 2.500L20 9M4 14.500l8 3 8-3M8 10.200v11.600M16 10.200v11.600" fill="none" /><path d="M15 1l5-.5 1 5-5 1.500-2-3z" fill="#3fc3f5" /><path d="M9 4l4-1 1 3.500-4 1z" fill="#2db3e8" />
      </svg>
    ),
  },
  {
    label: "Paint",
    icon: (
      <svg viewBox="0 0 24 24" className="size-6">
        <path d="M11 4C5 4 1 8.500 1 13.500S5 22 9.500 22c2 0 2.500-1 2.300-2.500-.2-1.800 1-2.500 3-2.500 3 0 6.200-1 6.200-5S17 4 11 4z" fill="#dfe6ec" stroke="#96a2ad" />
        <circle cx="6" cy="9.500" r="1.800" fill="#e33b2e" /><circle cx="11" cy="7.500" r="1.700" fill="#2f9fe0" /><circle cx="4.500" cy="14" r="1.700" fill="#f2bd27" /><circle cx="7" cy="18" r="1.700" fill="#49b54a" />
        <path d="M22.500.5c-2 2-6.500 10-8 14.500L12 22l5-5.500C19 12 22 5 22.500.5z" fill="#c97f37" /><path d="M22.500.5c-1.500 1-3.500 4.500-5 7.500l2.500 1z" fill="#f0c894" />
      </svg>
    ),
  },
  {
    label: "Notes",
    icon: (
      <svg viewBox="0 0 24 24" className="size-6">
        <path d="M1 3h11v19H1z" fill="#fff" /><path d="M1 3h22v2H1z" fill="#e4e4e4" /><path d="M1 3h7v1.500H1z" fill="#2a8fd0" /><path d="M8 11h15v12H8z" fill="#e9e9e9" /><path d="M11 2l3 3h4l3-3 1.500 8-5 4.500-6.500-2.500z" fill="#a4a7aa" /><path d="M3 8h4M3 11h4M3 14h4M11 17h9M11 20h9" stroke="#b9bcbf" />
      </svg>
    ),
  },
];

function Taskbar() {
  return (
    <footer className="absolute inset-x-0 bottom-0 flex h-10 items-stretch bg-[#000d18] text-white">
      <button aria-label="Start" className="flex w-12 items-center justify-center">
        <svg viewBox="0 0 16 16" className="size-4" fill="#fff"><path d="M0 2.300l6.500-.9v6.100H0zM7.300 1.300L16 0v7.500H7.300zM0 8.300h6.500v6.200L0 13.600zM7.300 8.300H16V16l-8.700-1.200z" /></svg>
      </button>
      <label className="flex w-[344px] items-center border-t border-[#c8c8c8] bg-[#f2f2f2] pr-[14px] pl-[10px]">
        <span className="size-5 rounded-full border-[3px] border-[#111]" />
        <input aria-label="Search" placeholder="Type here to search" className="ml-[10px] min-w-0 flex-1 text-[14px] outline-none placeholder:text-[#444]" />
        <svg viewBox="0 0 12 18" className="h-[18px] w-3" fill="none" stroke="#333" strokeWidth="1.200"><rect x="3.500" y=".8" width="5" height="10" rx="2" /><path d="M1 8v2.500c0 2 1.500 3 3 3h4c1.500 0 3-1 3-3V8M6 13.500V17M3.500 17h5" /></svg>
      </label>
      <button aria-label="Task view" className="mr-[3px] flex w-12 items-center justify-center">
        <svg viewBox="0 0 20 16" className="h-4 w-5" fill="none" stroke="#fff" strokeWidth="1.300"><path d="M5 1.500h10v13H5zM3 3.500H1v9h2M17 3.500h2v9h-2" /></svg>
      </button>
      <div className="flex gap-px">
        {apps.map((a) => (
          <button key={a.label} aria-label={a.label} className={"flex w-12 flex-col items-center " + (a.active ? "bg-[#333f48]" : "")}>
            <span className="flex flex-1 items-center">{a.icon}</span>
            <span className={"h-[2px] bg-[#84e0d4] " + (a.active ? "w-12" : "w-10")} />
          </button>
        ))}
      </div>
      <div className="ml-auto flex items-center text-[11px] leading-4">
        <button aria-label="Show hidden icons" className="flex w-6 justify-center"><svg viewBox="0 0 12 12" className="size-3" fill="none" stroke="#fff" strokeWidth="1.200"><path d="M1 8.500l5-5 5 5" /></svg></button>
        <button aria-label="Network" className="flex w-6 justify-center"><svg viewBox="0 0 16 16" className="size-4" fill="none" stroke="#fff"><path d="M3.500 3.500h12v8h-12zM9.500 11.500v2M6 14h7" /><path d="M.5 2.500h4v5h-4zM2.500 7.500V14H6" fill="#000d18" /></svg></button>
        <button aria-label="Volume" className="flex w-6 justify-center"><svg viewBox="0 0 16 16" className="size-4" fill="none" stroke="#fff"><path d="M1 6h2.500L7 2.500v11L3.500 10H1z" /><path d="M9 6c.8 1.200.8 2.800 0 4M11 4.500c1.500 2 1.500 5 0 7M13 3c2.300 3 2.300 7 0 10" /></svg></button>
        <button className="w-[40px] text-center">ENG<br />IS</button>
        <button className="w-[68px] text-center">5:33 PM<br />6/10/2019</button>
        <button aria-label="Action center" className="mr-4 flex w-8 justify-center"><svg viewBox="0 0 16 16" className="size-4"><path d="M0 1h16v11H9l-3 3.500V12H0z" fill="#fff" /><path d="M3 4h10M3 6.500h10M3 9h10" stroke="#000d18" /></svg></button>
      </div>
    </footer>
  );
}

export default function App() {
  return (
    <main className="grid h-screen grid-cols-2 overflow-hidden bg-[#0063b1] font-['Open_Sans','Noto_Sans',sans-serif]">
      <div className="relative">
        <RegistryWindow />
        <StatusWindow />
        <FirefoxWindow />
      </div>
      <div className="relative">
        <ExplorerWindow />
        <Taskbar />
      </div>
    </main>
  );
}
